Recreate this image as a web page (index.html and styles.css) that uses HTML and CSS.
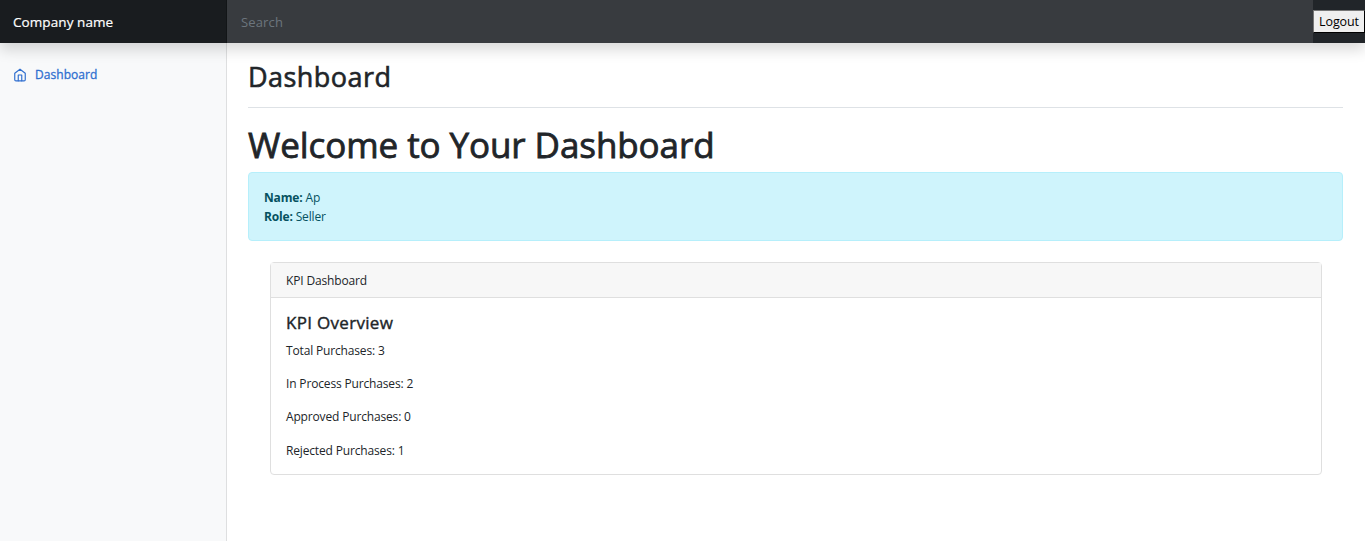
FILE: index.html
```html
<!DOCTYPE html>
<html lang="en">
<head>
<meta charset="utf-8">
<title>Dashboard</title>
<link rel="stylesheet" href="styles.css">
</head>
<body>
<header class="navbar">
  <a class="brand">Company name</a>
  <input class="search" type="text" placeholder="Search" aria-label="Search">
  <button class="logout" type="button">Logout</button>
</header>
<div class="layout">
  <nav class="sidebar">
    <a class="nav-link">
      <svg class="nav-icon" viewBox="0 0 24 24" fill="none" stroke="currentColor" stroke-width="2" stroke-linecap="round" stroke-linejoin="round"><path d="M3 9l9-7 9 7v11a2 2 0 0 1-2 2H5a2 2 0 0 1-2-2z"/><path d="M9 22V12h6v10"/></svg>
      <span>Dashboard</span>
    </a>
  </nav>
  <main class="main">
    <div class="page-head"><h2 class="page-title">Dashboard</h2></div>
    <h1 class="welcome">Welcome to Your Dashboard</h1>
    <div class="alert">
      <div><strong>Name:</strong> Ap</div>
      <div><strong>Role:</strong> Seller</div>
    </div>
    <section class="card">
      <div class="card-header">KPI Dashboard</div>
      <div class="card-body">
        <h5 class="card-title">KPI Overview</h5>
        <p class="card-text">Total Purchases: 3</p>
        <p class="card-text">In Process Purchases: 2</p>
        <p class="card-text">Approved Purchases: 0</p>
        <p class="card-text">Rejected Purchases: 1</p>
      </div>
    </section>
  </main>
</div>
</body>
</html>
```
FILE: styles.css
```css
* { box-sizing: border-box; }
body {
  margin: 0;
  height: 541px;
  overflow: hidden;
  display: flex;
  flex-direction: column;
  font: 12px/19px "Open Sans", "Noto Sans", sans-serif;
  letter-spacing: -0.16px;
  color: #212529;
  background: #fff;
}
.navbar {
  position: relative;
  z-index: 1;
  display: flex;
  align-items: center;
  flex: none;
  height: 43px;
  background: #212529;
  box-shadow: 0 7px 14px rgba(0, 0, 0, .15);
}
.brand {
  width: 227px;
  height: 43px;
  padding-left: 13px;
  font-size: 13.5px;
  line-height: 44px;
  letter-spacing: 0.08px;
  color: #fff;
  background: #191c1f;
  box-shadow: inset -1px 0 0 rgba(0, 0, 0, .25);
  -webkit-text-stroke: 0.2px currentColor;
}
.search {
  flex: 1;
  height: 43px;
  padding: 0 14px;
  border: 0;
  font: 13px "Open Sans", "Noto Sans", sans-serif;
  letter-spacing: 0.15px;
  color: #fff;
  background: #383b3f;
}
.search::placeholder { color: #6c757d; opacity: 1; }
.logout {
  width: 52px;
  height: 23px;
  padding: 0;
  border: 1px solid #000;
  border-top-color: #767676;
  border-left-color: #767676;
  font: 12.5px/20px "Open Sans", "Noto Sans", sans-serif;
  letter-spacing: -0.1px;
  color: #000;
  background: #efefef;
}
.layout { display: flex; flex: 1; min-height: 0; }
.sidebar {
  flex: none;
  width: 227px;
  padding: 22px 13px;
  background: #f8f9fa;
  box-shadow: inset -1px 0 0 rgba(0, 0, 0, .1);
}
.nav-link {
  display: flex;
  align-items: center;
  gap: 8px;
  letter-spacing: 0.05px;
  color: #2f6fd0;
}
.nav-link span { -webkit-text-stroke: 0.3px currentColor; }
.nav-icon { width: 14px; height: 14px; }
.main { flex: 1; padding: 14px 22px 0 21px; }
.page-head {
  height: 51px;
  margin-bottom: 17px;
  border-bottom: 1px solid #dee2e6;
}
.page-title, .welcome, .card-title { margin: 0; font-weight: 400; }
.page-title {
  font-size: 27px;
  line-height: 40px;
  letter-spacing: 0.45px;
  -webkit-text-stroke: 0.6px currentColor;
}
.welcome {
  height: 47px;
  font-size: 35px;
  line-height: 40px;
  letter-spacing: -0.08px;
  -webkit-text-stroke: 0.8px currentColor;
}
.alert {
  height: 69px;
  padding: 15px;
  border: 1px solid #b6effb;
  border-radius: 4px;
  color: #055160;
  background: #cff4fc;
}
.card {
  height: 213px;
  margin: 21px 21px 0 22px;
  border: 1px solid #dfdfdf;
  border-radius: 4px;
}
.card-header {
  height: 35px;
  padding: 8px 15px;
  border-bottom: 1px solid #dfdfdf;
  background: #f7f7f7;
}
.card-body { padding: 14px 15px; }
.card-title {
  height: 29px;
  font-size: 17px;
  line-height: 22px;
  letter-spacing: 0.3px;
  -webkit-text-stroke: 0.4px currentColor;
}
.card-text { margin: 0 0 14.2px; }
```
